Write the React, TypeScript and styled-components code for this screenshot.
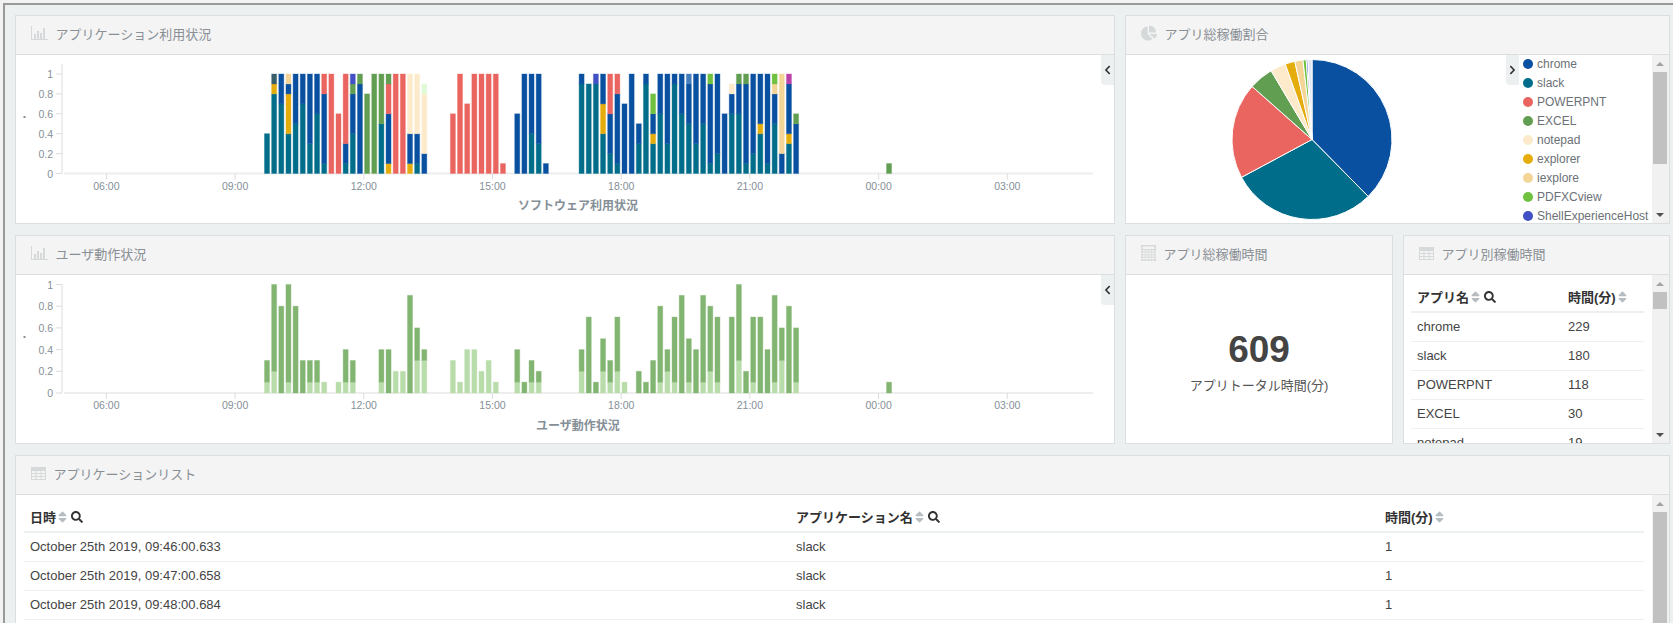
import styled, { createGlobalStyle } from "styled-components";
import { FaChartPie, FaChevronLeft, FaChevronRight, FaSearch, FaSort } from "react-icons/fa";

const GlobalStyle = createGlobalStyle`
  html, body {
    margin: 0;
    height: 100%;
    overflow: hidden;
    background: #f2f2f2;
    font-family: "Liberation Sans", "Noto Sans CJK JP", sans-serif;
  }
`;

const Frame = styled.div`
  box-sizing: border-box;
  margin: 3px 0 0 3px;
  height: 620px;
  padding: 10px 0 0 10px;
  overflow: hidden;
  background: #ecf0f1;
  border-top: 2px solid #999;
  border-left: 2px solid #999;
`;

const Board = styled.div`
  display: grid;
  grid-template-columns: 1100px 268px 266.5px;
  grid-template-rows: 209px 209px 300px;
  column-gap: 10px;
  row-gap: 11px;
`;

const Panel = styled.section<{ $span?: number }>`
  grid-column: span ${(p) => p.$span ?? 1};
  box-sizing: border-box;
  display: flex;
  flex-direction: column;
  min-width: 0;
  overflow: hidden;
  background: #fff;
  border: 1px solid #dcdfe0;
`;

const PanelHeader = styled.header`
  box-sizing: border-box;
  flex: 0 0 39px;
  display: flex;
  align-items: center;
  gap: 7.500px;
  padding: 0 0 4px 15px;
  background: #f4f4f4;
  border-bottom: 1px solid #dcdfe0;
  font-size: 13px;
  color: #898f94;
  svg {
    flex: none;
    color: #d6d9da;
  }
`;

const PanelBody = styled.div`
  position: relative;
  flex: 1;
  display: flex;
  min-height: 0;
  overflow: hidden;
`;

const Tab = styled.button`
  flex: none;
  width: 13px;
  height: 30px;
  padding: 0;
  display: flex;
  align-items: center;
  justify-content: center;
  border: 0;
  border-bottom-left-radius: 4px;
  background: #ecf0f1;
  color: #333;
  svg {
    width: 9px;
    height: 10px;
  }
`;

const ChartTab = styled(Tab)`
  position: absolute;
  top: 0;
  right: 0;
`;

const AxisText = styled.text`
  font-size: 10.5px;
  fill: #858f97;
`;

const AxisTitle = styled.text`
  font-size: 12px;
  font-weight: 700;
  fill: #858f97;
`;

const PieArea = styled.div`
  flex: 0 0 380px;
`;

const LegendList = styled.ul`
  flex: 1;
  margin: -1px 0 0;
  padding: 0 0 0 4px;
  list-style: none;
  overflow: hidden;
`;

const LegendItem = styled.li`
  display: flex;
  align-items: center;
  gap: 4px;
  height: 19px;
  font-size: 12px;
  color: #6c7177;
  white-space: nowrap;
`;

const LegendDot = styled.span<{ $color: string }>`
  flex: none;
  width: 10px;
  height: 10px;
  border-radius: 50%;
  background: ${(p) => p.$color};
`;

const ScrollTrack = styled.div`
  flex: 0 0 17px;
  display: flex;
  flex-direction: column;
  background: #f1f1f1;
`;

const ScrollArrow = styled.div<{ $down?: boolean }>`
  flex: 0 0 17px;
  display: flex;
  align-items: center;
  justify-content: center;
  &::before {
    content: "";
    border-left: 4px solid transparent;
    border-right: 4px solid transparent;
    ${(p) => (p.$down ? "border-top: 4px solid #505050;" : "border-bottom: 4px solid #a3a3a3;")}
  }
`;

const ScrollThumb = styled.div<{ $height: number }>`
  flex: 0 0 ${(p) => p.$height}px;
  margin: 0 1.5px;
  background: #c1c1c1;
`;

const ScrollRest = styled.div`
  flex: 1;
`;

const TotalBox = styled.div`
  flex: 1;
  display: flex;
  flex-direction: column;
  align-items: center;
  padding-top: 53px;
  color: #444;
`;

const TotalValue = styled.div`
  font-size: 37px;
  font-weight: 700;
  line-height: 44px;
`;

const TotalLabel = styled.div`
  margin-top: 5px;
  font-size: 13px;
  line-height: 18px;
  color: #555;
`;

const TableWrap = styled.div<{ $left: number; $right: number }>`
  flex: 1;
  min-width: 0;
  padding: 7px ${(p) => p.$right}px 0 ${(p) => p.$left}px;
  overflow: hidden;
`;

const Table = styled.table`
  width: 100%;
  table-layout: fixed;
  border-collapse: collapse;
  font-size: 13px;
  color: #444;
`;

const HeadCell = styled.th<{ $width: number }>`
  box-sizing: border-box;
  width: ${(p) => p.$width}px;
  height: 30px;
  padding: 0 0 0 6px;
  border-bottom: 2px solid #ecf0f1;
  text-align: left;
  font-weight: 700;
  color: #333;
  white-space: nowrap;
`;

const HeadInner = styled.span`
  display: inline-flex;
  align-items: center;
  gap: 2px;
`;

const SortIcon = styled(FaSort)`
  color: #b5bcc2;
  width: 9px;
  height: 14px;
`;

const SearchIcon = styled(FaSearch)`
  color: #333;
  width: 12px;
  height: 12px;
  margin-left: 2px;
`;

const Cell = styled.td`
  box-sizing: border-box;
  height: 29px;
  padding: 0 0 0 6px;
  border-bottom: 1px solid #ecf0f1;
  white-space: nowrap;
`;

// 棒グラフのアイコン
const BarIcon = () => (
  <svg width="17" height="14" viewBox="0 0 17 14" fill="currentColor">
    <rect x="0" y="0" width="1" height="14" />
    <rect x="0" y="13" width="17" height="1" />
    <rect x="3" y="8" width="2" height="5" />
    <rect x="6" y="5" width="2" height="8" />
    <rect x="9" y="7" width="2" height="6" />
    <rect x="12" y="2" width="2" height="11" />
  </svg>
);

const CalcIcon = () => (
  <svg width="15" height="16" viewBox="0 0 15 16" fill="currentColor">
    <path d="M0 0h15v16H0z M1.500 1.500v2.500h12V1.500z" fillRule="evenodd" />
    {[6, 8.500, 11, 13.500].map((y) => (
      <path key={y} d={`M0 ${y}h15`} stroke="#f4f4f4" strokeWidth="0.8" />
    ))}
    {[3, 6, 9, 12].map((x) => (
      <path key={x} d={`M${x} 5v11`} stroke="#f4f4f4" strokeWidth="0.8" />
    ))}
  </svg>
);

const TableIcon = () => (
  <svg width="15" height="13" viewBox="0 0 15 13" fill="currentColor">
    <path d="M0 0h15v13H0z M1 4v2h3.500V4z M5.500 4v2h4V4z M10.500 4v2H14V4z M1 7v2h3.500V7z M5.500 7v2h4V7z M10.500 7v2H14V7z M1 10v2h3.500v-2z M5.500 10v2h4v-2z M10.500 10v2H14v-2z" fillRule="evenodd" />
  </svg>
);

const APP_COLORS: Record<string, string> = {
  C: "#0a50a1",
  T: "#006e8a",
  P: "#ea6460",
  E: "#629e51",
  N: "#fceaca",
  X: "#e5ac0e",
  I: "#f4d598",
  V: "#70c13f",
  S: "#4150c4",
  D: "#385f6c",
  L: "#e0f9d7",
  M: "#ba43a9",
  B: "#447ebc",
};

// 10分ごとのバケット。文字がアプリ、数字が0.1単位の高さ(下から積む)
const APP_BARS: Record<number, string> = {
  0: "T4", 1: "T8X1D1", 2: "T7C3", 3: "T4X4C1I1", 4: "T5C5", 5: "T7C3", 6: "T3C7", 7: "T6C4",
  8: "T1C7P2", 9: "P10", 10: "P6", 11: "T1C2P7", 12: "T4C4E1S1", 13: "C9E1", 14: "E8", 15: "E10",
  16: "T5E5", 17: "X1C5P3E1", 18: "P10", 19: "P10", 20: "X1C3N6", 21: "T1C3N6", 22: "C2N6L1",
  26: "P6", 27: "P10", 28: "P7", 29: "P10", 30: "P10", 31: "P10", 32: "P10", 33: "P1",
  35: "C6", 36: "C10", 37: "T4C6", 38: "T3C7", 39: "C1",
  44: "T9C1", 45: "T9", 46: "T9S1", 47: "T4X3C3", 48: "T2C4P4", 49: "T1C7P2", 50: "C7", 51: "C10",
  52: "T3C2", 53: "T9C1", 54: "T3X1C2V2", 55: "T6C4", 56: "T3C7", 57: "T9C1", 58: "T6C4",
  59: "T5C4B1", 60: "T3C7", 61: "T5C5", 62: "T1C8V1", 63: "T2C8", 64: "C6", 65: "T6C2N1",
  66: "T6C3E1", 67: "T1C8E1", 68: "T2C8", 69: "T4X1C5", 70: "T1C9", 71: "T5C3I1V1", 72: "C2I8",
  73: "T3X1C5M1", 74: "C5E1", 87: "E1",
};

const ACTION_COLORS: Record<string, string> = { a: "#b9dcab", b: "#82b571" };

const ACTION_BARS: Record<number, string> = {
  0: "a1b2", 1: "a2b8", 2: "b8", 3: "a1b9", 4: "b8", 5: "b3", 6: "a1b2", 7: "a1b2", 8: "a1",
  10: "a1", 11: "a1b3", 12: "a1b2", 16: "a1b3", 17: "b4", 18: "a2", 19: "a2", 20: "b9",
  21: "a3b3", 22: "a3b1", 26: "a3", 27: "a1", 28: "a4", 29: "a4", 30: "a2", 31: "a3", 32: "a1",
  35: "a1b3", 36: "b1", 37: "a1b2", 38: "a1b1",
  44: "a2b2", 45: "b7", 46: "b1", 47: "a2b3", 48: "a1b2", 49: "a2b5", 50: "a1", 52: "b2", 53: "b1",
  54: "b3", 55: "a1b7", 56: "a2b2", 57: "a1b6", 58: "b9", 59: "a1b4", 60: "b4", 61: "a1b8",
  62: "a2b6", 63: "a1b6", 65: "b7", 66: "a3b7", 67: "b2", 68: "a1b6", 69: "b7", 70: "b4",
  71: "a1b8", 72: "a3b3", 73: "b8", 74: "a1b5", 87: "b1",
};

const TICKS = ["06:00", "09:00", "12:00", "15:00", "18:00", "21:00", "00:00", "03:00"];
const Y_TICKS = [1, 0.8, 0.6, 0.4, 0.2, 0];

type ChartProps = {
  bars: Record<number, string>;
  colors: Record<string, string>;
  top: number;
  bottom: number;
  axisTop: number;
  title: string;
};

const StackChart = ({ bars, colors, top, bottom, axisTop, title }: ChartProps) => {
  const unit = (bottom - top) / 10;
  const y = (v: number) => bottom - (bottom - top) * v;

  return (
    <svg width="1098" height="168" viewBox="0 0 1098 168">
      <path d={`M46 ${axisTop}V${bottom}`} stroke="#dcdcdc" fill="none" />
      <path d={`M48 ${bottom}H1077`} stroke="#eee" strokeWidth="2" fill="none" />
      {Y_TICKS.map((v) => (
        <g key={v}>
          <path d={`M40 ${y(v)}H46`} stroke="#dcdcdc" />
          <AxisText x="37" y={y(v) + 4} textAnchor="end">
            {v}
          </AxisText>
        </g>
      ))}
      <rect x="7.500" y="61" width="2" height="2" fill="#858f97" />
      {TICKS.map((t, i) => {
        const x = 90.4 + 128.7 * i;
        return (
          <g key={t}>
            <path d={`M${x} ${bottom}v6`} stroke="#dcdcdc" />
            <AxisText x={x} y={bottom + 16} textAnchor="middle">
              {t}
            </AxisText>
          </g>
        );
      })}
      {Object.entries(bars).map(([idx, stack]) => {
        const x = 248.5 + 7.15 * Number(idx);
        let acc = 0;
        return [...stack.matchAll(/([A-Za-z])(\d+)/g)].map((m) => {
          const n = Number(m[2]);
          const rectY = bottom - unit * (acc + n);
          acc += n;
          return (
            <rect
              key={`${idx}-${m[1]}`}
              x={x}
              y={rectY}
              width="5"
              height={unit * n}
              fill={colors[m[1]]}
              stroke={colors[m[1]]}
              strokeOpacity="0.35"
            />
          );
        });
      })}
      <AxisTitle x="562" y="155" textAnchor="middle">
        {title}
      </AxisTitle>
    </svg>
  );
};

const SLICES = [
  { name: "chrome", value: 229, color: "#0a50a1" },
  { name: "slack", value: 180, color: "#006e8a" },
  { name: "POWERPNT", value: 118, color: "#ea6460" },
  { name: "EXCEL", value: 30, color: "#629e51" },
  { name: "notepad", value: 19, color: "#fceaca" },
  { name: "explorer", value: 12, color: "#e5ac0e" },
  { name: "iexplore", value: 10, color: "#f4d598" },
  { name: "PDFXCview", value: 4, color: "#70c13f" },
  { name: "ShellExperienceHost", value: 2, color: "#4150c4" },
  { name: "", value: 5, color: "#e0e4f4" },
];

const PieChart = () => {
  const total = SLICES.reduce((sum, s) => sum + s.value, 0);
  const cx = 186;
  const cy = 84.5;
  const r = 80;
  let angle = 0;
  const point = (deg: number) => {
    const rad = (deg * Math.PI) / 180;
    return `${cx + r * Math.sin(rad)} ${cy - r * Math.cos(rad)}`;
  };

  return (
    <svg width="380" height="168" viewBox="0 0 380 168">
      {SLICES.map((s) => {
        const start = angle;
        angle += (s.value / total) * 360;
        const large = angle - start > 180 ? 1 : 0;
        return (
          <path
            key={s.color}
            d={`M${cx} ${cy}L${point(start)}A${r} ${r} 0 ${large} 1 ${point(angle)}Z`}
            fill={s.color}
            stroke="#fff"
            strokeWidth="1"
          />
        );
      })}
    </svg>
  );
};

const Scrollbar = ({ thumb }: { thumb: number }) => (
  <ScrollTrack>
    <ScrollArrow />
    <ScrollThumb $height={thumb} />
    <ScrollRest />
    <ScrollArrow $down />
  </ScrollTrack>
);

const Head = ({ label, width, search }: { label: string; width: number; search?: boolean }) => (
  <HeadCell $width={width}>
    <HeadInner>
      {label}
      <SortIcon />
      {search && <SearchIcon />}
    </HeadInner>
  </HeadCell>
);

const APP_TIMES = [
  ["chrome", "229"],
  ["slack", "180"],
  ["POWERPNT", "118"],
  ["EXCEL", "30"],
  ["notepad", "19"],
];

const APP_LIST = [
  ["October 25th 2019, 09:46:00.633", "slack", "1"],
  ["October 25th 2019, 09:47:00.658", "slack", "1"],
  ["October 25th 2019, 09:48:00.684", "slack", "1"],
];

const App = () => {
  return (
    <Frame>
      <GlobalStyle />
      <Board>
        <Panel>
          <PanelHeader>
            <BarIcon />
            アプリケーション利用状況
          </PanelHeader>
          <PanelBody>
            <StackChart bars={APP_BARS} colors={APP_COLORS} top={19} bottom={118.5} axisTop={9} title="ソフトウェア利用状況" />
            <ChartTab>
              <FaChevronLeft />
            </ChartTab>
          </PanelBody>
        </Panel>

        <Panel $span={2}>
          <PanelHeader>
            <FaChartPie size={16} />
            アプリ総稼働割合
          </PanelHeader>
          <PanelBody>
            <PieArea>
              <PieChart />
            </PieArea>
            <Tab>
              <FaChevronRight />
            </Tab>
            <LegendList>
              {SLICES.filter((s) => s.name).map((s) => (
                <LegendItem key={s.name}>
                  <LegendDot $color={s.color} />
                  {s.name}
                </LegendItem>
              ))}
            </LegendList>
            <Scrollbar thumb={92} />
          </PanelBody>
        </Panel>

        <Panel>
          <PanelHeader>
            <BarIcon />
            ユーザ動作状況
          </PanelHeader>
          <PanelBody>
            <StackChart bars={ACTION_BARS} colors={ACTION_COLORS} top={9.500} bottom={118} axisTop={9.500} title="ユーザ動作状況" />
            <ChartTab>
              <FaChevronLeft />
            </ChartTab>
          </PanelBody>
        </Panel>

        <Panel>
          <PanelHeader>
            <CalcIcon />
            アプリ総稼働時間
          </PanelHeader>
          <PanelBody>
            <TotalBox>
              <TotalValue>609</TotalValue>
              <TotalLabel>アプリトータル時間(分)</TotalLabel>
            </TotalBox>
          </PanelBody>
        </Panel>

        <Panel>
          <PanelHeader>
            <TableIcon />
            アプリ別稼働時間
          </PanelHeader>
          <PanelBody>
            <TableWrap $left={7} $right={8}>
              <Table>
                <thead>
                  <tr>
                    <Head label="アプリ名" width={151} search />
                    <Head label="時間(分)" width={82} />
                  </tr>
                </thead>
                <tbody>
                  {APP_TIMES.map(([name, time]) => (
                    <tr key={name}>
                      <Cell>{name}</Cell>
                      <Cell>{time}</Cell>
                    </tr>
                  ))}
                </tbody>
              </Table>
            </TableWrap>
            <Scrollbar thumb={17} />
          </PanelBody>
        </Panel>

        <Panel $span={3}>
          <PanelHeader>
            <TableIcon />
            アプリケーションリスト
          </PanelHeader>
          <PanelBody>
            <TableWrap $left={8} $right={8}>
              <Table>
                <thead>
                  <tr>
                    <Head label="日時" width={766} search />
                    <Head label="アプリケーション名" width={589} search />
                    <Head label="時間(分)" width={265} />
                  </tr>
                </thead>
                <tbody>
                  {APP_LIST.map(([date, app, time]) => (
                    <tr key={date}>
                      <Cell>{date}</Cell>
                      <Cell>{app}</Cell>
                      <Cell>{time}</Cell>
                    </tr>
                  ))}
                </tbody>
              </Table>
            </TableWrap>
            <Scrollbar thumb={300} />
          </PanelBody>
        </Panel>
      </Board>
    </Frame>
  );
};

export default App;
